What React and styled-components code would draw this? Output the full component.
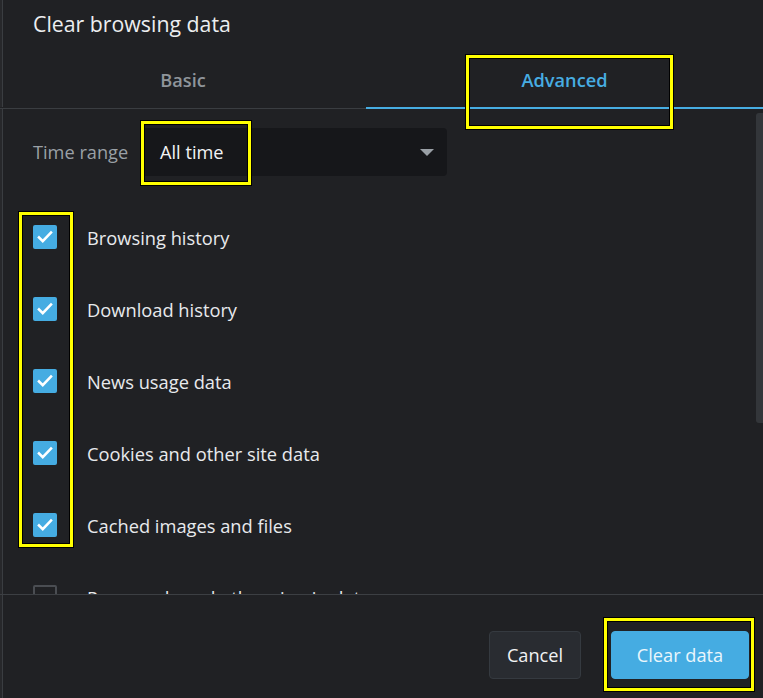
import React from "react"
import styled, { createGlobalStyle } from "styled-components"

const GlobalStyle = createGlobalStyle`
  html, body {
    margin: 0;
    background: #202124;
  }
  * { box-sizing: border-box; }
`

const font = `"Open Sans", "Noto Sans", "Liberation Sans", sans-serif`

const Dialog = styled.div`
  position: relative;
  width: 763px;
  height: 698px;
  display: flex;
  flex-direction: column;
  background: #202124;
  box-shadow: inset 2px 0 0 #27282b, inset 3px 0 0 #3a3d41;
  font-family: ${font};
  overflow: hidden;
`

const Header = styled.h1`
  margin: 0;
  height: 55px;
  padding: 9px 33px 0;
  font-size: 21.3px;
  font-weight: 400;
  color: #eceef0;
`

const Tabs = styled.div`
  display: grid;
  grid-template-columns: 366px 1fr;
  height: 54px;
`

const Tab = styled.div`
  display: flex;
  align-items: center;
  justify-content: center;
  padding-bottom: 3px;
  font-size: 18.2px;
  font-weight: 600;
  color: ${p => (p.$active ? "#47ade2" : "#8f959b")};
  border-bottom: ${p => (p.$active ? "2px solid #47ade2" : "1px solid #3a3d41")};
  box-shadow: ${p => (p.$active ? "none" : "inset 0 -1px 0 #202124")};
`

const Body = styled.div`
  position: relative;
  flex: 1;
  overflow: hidden;
  padding: 19px 33px 0;
  border-bottom: 1px solid #3c3f43;
`

const Scrollbar = styled.div`
  position: absolute;
  right: 0;
  top: 4px;
  width: 7px;
  height: 310px;
  border-radius: 3px 0 0 3px;
  background: #33363a;
`

const TimeRow = styled.div`
  display: flex;
  align-items: center;
  height: 48px;
`

const Label = styled.span`
  width: 107px;
  font-size: 18.2px;
  color: #9aa0a6;
`

const Select = styled.div`
  width: 307px;
  height: 48px;
  display: flex;
  align-items: center;
  justify-content: space-between;
  padding: 0 13px 0 20px;
  background: #16171a;
  border-radius: 4px;
  font-size: 18.2px;
  color: #f1f3f4;
`

const Arrow = styled.span`
  width: 0;
  height: 0;
  border-left: 7px solid transparent;
  border-right: 7px solid transparent;
  border-top: 7px solid #9aa0a6;
`

const List = styled.div`
  margin-top: 25px;
  display: flex;
  flex-direction: column;
`

const Row = styled.label`
  display: flex;
  align-items: center;
  gap: 30px;
  height: 72px;
  font-size: 18.3px;
  color: #e8eaed;
`

const Box = styled.span`
  width: 24px;
  height: 24px;
  border-radius: 2px;
  display: flex;
  align-items: center;
  justify-content: center;
  background: ${p => (p.$checked ? "#45ace2" : "transparent")};
  border: ${p => (p.$checked ? "none" : "2px solid #4a4d52")};
`

const Footer = styled.div`
  height: 103px;
  display: flex;
  justify-content: flex-end;
  align-items: flex-start;
  gap: 30px;
  padding: 36px 14px 0 0;
`

const Button = styled.button`
  height: 48px;
  width: ${p => (p.$primary ? "138px" : "92px")};
  padding: 0;
  border-radius: 4px;
  font-family: ${font};
  font-size: 18.2px;
  border: 1px solid ${p => (p.$primary ? "#45ace2" : "#353a40")};
  background: ${p => (p.$primary ? "#45ace2" : "#292c31")};
  color: ${p => (p.$primary ? "#eaf6fc" : "#f1f3f4")};
`

const Highlight = styled.div`
  position: absolute;
  border: 3px solid #ffff00;
  box-shadow: 0 0 0 1px #000, inset 0 0 0 1px #000;
  pointer-events: none;
`

const Check = () => (
  <svg width="18" height="18" viewBox="0 0 24 24">
    <path d="M4 12.5l5 5L20 6" fill="none" stroke="#fff" strokeWidth="3.4" strokeLinecap="square" />
  </svg>
)

const items = [
  { label: "Browsing history", checked: true },
  { label: "Download history", checked: true },
  { label: "News usage data", checked: true },
  { label: "Cookies and other site data", checked: true },
  { label: "Cached images and files", checked: true },
  { label: "Passwords and other sign-in data", checked: false },
]

const highlights = [
  { left: 466, top: 55, width: 207, height: 74 },
  { left: 141, top: 121, width: 110, height: 64 },
  { left: 19, top: 212, width: 54, height: 335 },
  { left: 604, top: 618, width: 150, height: 73 },
]

export default function App() {
  return (
    <>
      <GlobalStyle />
      <Dialog>
        <Header>Clear browsing data</Header>
        <Tabs>
          <Tab>Basic</Tab>
          <Tab $active>Advanced</Tab>
        </Tabs>
        <Body>
          <Scrollbar />
          <TimeRow>
            <Label>Time range</Label>
            <Select>
              All time
              <Arrow />
            </Select>
          </TimeRow>
          <List>
            {items.map(item => (
              <Row key={item.label}>
                <Box $checked={item.checked}>{item.checked && <Check />}</Box>
                {item.label}
              </Row>
            ))}
          </List>
        </Body>
        <Footer>
          <Button>Cancel</Button>
          <Button $primary>Clear data</Button>
        </Footer>
        {highlights.map((h, i) => (
          <Highlight
            key={i}
            style={{ left: h.left, top: h.top, width: h.width, height: h.height }}
          />
        ))}
      </Dialog>
    </>
  )
}
